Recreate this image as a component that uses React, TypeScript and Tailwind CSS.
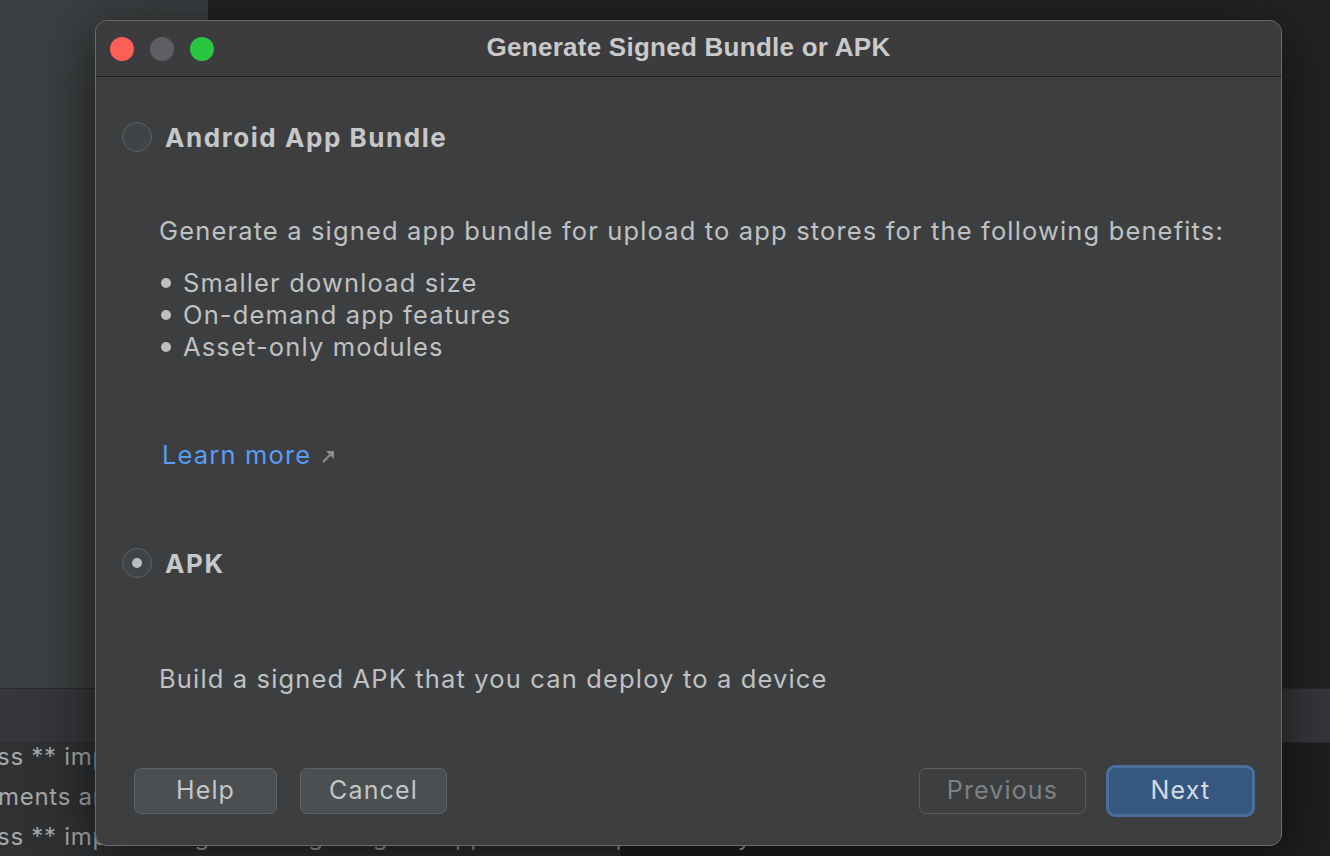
import React from "react";

function Radio({ checked }: { checked?: boolean }) {
  return (
    <div className="w-[30px] h-[30px] rounded-full border-[1.5px] border-[#5f6264] bg-[#3f4446] flex items-center justify-center shrink-0">
      {checked && <div className="w-[10px] h-[10px] rounded-full bg-[#b9bdbf]" />}
    </div>
  );
}

function Bullet({ children }: { children: React.ReactNode }) {
  return (
    <div className="flex items-center h-[32px]">
      <div className="w-[10px] h-[10px] rounded-full bg-[#bdbfc1] ml-[2px] mr-[12px]" />
      <span>{children}</span>
    </div>
  );
}

export default function App() {
  return (
    <div className="relative w-[1330px] h-[856px] overflow-hidden bg-[#222222] font-['Inter',sans-serif]">
      {/* IDE behind the dialog */}
      <div className="flex flex-col h-full">
        <div className="flex h-[688px]">
          <div className="w-[208px] bg-[#3c3f41]" />
          <div className="flex-1 bg-[#232323]" />
        </div>
        <div className="h-[55px] border-y border-[#2a2b2d] bg-[#35373a]" />
        <div className="flex-1 flex">
          <div className="w-[620px] bg-[#2f3133]" />
          <div className="flex-1 bg-[#1f1f1f]" />
        </div>
      </div>
      <div className="absolute left-0 top-[737px] w-[1330px] text-[24px] leading-[40px] tracking-[0.03em] text-[#a7a9ab] whitespace-nowrap">
        <div className="-ml-[3px]">ss ** imp</div>
        <div className="-ml-[2px]">ments ar</div>
        <div className="-ml-[3px]">ss ** important: generating a signed app bundle requires a key store</div>
      </div>

      {/* dialog window */}
      <div className="absolute left-[95px] top-[20px] w-[1187px] h-[826px] rounded-[12px] border border-[#6b6b6d] bg-[#3d3e40] shadow-[0_12px_60px_rgba(0,0,0,0.6)] overflow-hidden flex flex-col">
        <div className="h-[56px] grid grid-cols-[1fr_auto_1fr] items-center bg-[#3c3b3d] border-b border-[#1c1c1d]">
          <div className="flex items-center gap-[16px] pl-[14px]">
            <div className="w-[24px] h-[24px] rounded-full bg-[#fe5f57]" />
            <div className="w-[24px] h-[24px] rounded-full bg-[#5f5e62]" />
            <div className="w-[24px] h-[24px] rounded-full bg-[#29c640]" />
          </div>
          <div className="text-[26px] font-bold text-[#c9c9ca] tracking-[0.01em] font-['Liberation_Sans',sans-serif] -mt-[2px]">
            Generate Signed Bundle or APK
          </div>
          <div />
        </div>

        <div className="flex flex-col pl-[26px] text-[#bfc1c3] text-[25.5px] tracking-[0.045em]">
          <div className="flex items-center h-[40px] mt-[40px] gap-[13px]">
            <Radio />
            <span className="font-bold text-[26px] text-[#c6c7c8] tracking-[0.06em]">Android App Bundle</span>
          </div>

          <div className="pl-[37px]">
            <div className="h-[32px] leading-[32px] mt-[58px]">
              Generate a signed app bundle for upload to app stores for the following benefits:
            </div>
            <div className="mt-[20px]">
              <Bullet>Smaller download size</Bullet>
              <Bullet>On-demand app features</Bullet>
              <Bullet>Asset-only modules</Bullet>
            </div>
            <div className="flex items-center h-[32px] mt-[76px] ml-[3px] gap-[10px]">
              <span className="text-[#589df6]">Learn more</span>
              <svg width="15" height="15" viewBox="0 0 15 15" className="mt-[2px]">
                <path d="M2 13 L10.5 4.5" stroke="#8b8d8f" strokeWidth="2.2" />
                <path d="M5 2 H13 V10 Z" fill="#8b8d8f" />
              </svg>
            </div>
          </div>

          <div className="flex items-center h-[40px] mt-[72px] gap-[13px]">
            <Radio checked />
            <span className="font-bold text-[26px] text-[#c6c7c8] tracking-[0.06em]">APK</span>
          </div>

          <div className="pl-[37px] h-[32px] leading-[32px] mt-[80px]">
            Build a signed APK that you can deploy to a device
          </div>

          <div className="flex items-center mt-[70px] pl-[12px] pr-[26px] text-[25px]">
            <button className="w-[143px] h-[46px] rounded-[7px] border border-[#5e6264] bg-[#4b4f51] text-[#c3c5c7]">
              Help
            </button>
            <button className="w-[147px] h-[46px] ml-[23px] rounded-[7px] border border-[#5e6264] bg-[#4b4f51] text-[#c3c5c7]">
              Cancel
            </button>
            <button className="w-[167px] h-[46px] ml-auto rounded-[7px] border border-[#5a5d5f] text-[#7f8183]">
              Previous
            </button>
            <button className="w-[149px] h-[52px] ml-[20px] rounded-[9px] border-[3px] border-[#4a6f9c] bg-[#365880] text-[#d5dbe2] flex items-center justify-center">
              Next
            </button>
          </div>
        </div>
      </div>
    </div>
  );
}
